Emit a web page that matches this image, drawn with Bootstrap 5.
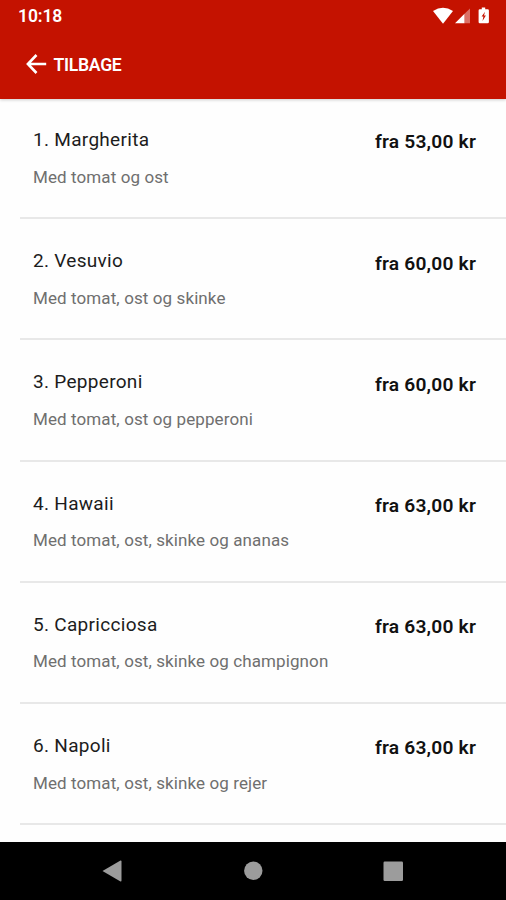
<!DOCTYPE html>
<html lang="da">
<head>
<meta charset="utf-8">
<meta name="viewport" content="width=device-width, initial-scale=1">
<title>Pizza</title>
<link href="https://cdn.jsdelivr.net/npm/bootstrap@5.3.0/dist/css/bootstrap.min.css" rel="stylesheet">
<style>
body { font-family: Roboto, "Noto Sans", sans-serif; background: #fefefe; color: #111; }
.app-screen { height: 900px; }
.app-header { background: #c41200; height: 98.6px; box-shadow: 0 1px 3px rgba(0,0,0,.2); }
.status-line { height: 32px; padding: 0 15px 0 18px; }
.clock { font-size: 17.5px; font-weight: 600; line-height: 32px; letter-spacing: -.1px; }
.back-link { height: 64px; gap: 6.5px; padding-left: 26px; font-size: 17.6px; font-weight: 600; letter-spacing: -.3px; }
.back-link span { line-height: 26px; padding-top: 1px; }
.menu-list { padding-left: 20px; margin-top: -.6px; }
.menu-item { height: 121.2px; border-bottom: 2px solid #e8e8e8; padding: 29.1px 30px 0 13px; }
.item-name { font-size: 19px; line-height: 26px; letter-spacing: .3px; color: #1c1c1c; }
.item-text { font-size: 17px; line-height: 24px; margin-top: 11.6px; color: #6f6f6f; letter-spacing: .1px; }
.item-price { font-size: 19.2px; line-height: 26px; padding-top: 2.4px; font-weight: 600; letter-spacing: .2px; }
.system-nav { height: 58px; background: #000; }
</style>
</head>
<body>
<div class="app-screen d-flex flex-column overflow-hidden">
  <header class="app-header flex-shrink-0 text-white">
    <div class="status-line d-flex align-items-center justify-content-between">
      <span class="clock">10:18</span>
      <svg width="60" height="20" viewBox="0 0 60 20" fill="#fff" aria-hidden="true">
        <path d="M2 4.4Q12 -2.2 22 4.4L12 17Z" transform="translate(0 .7)"/>
        <path d="M24 17.3 33.5 7.8V17.3Z"/>
        <path d="M33.5 7.8 39 2.6V17.3H33.5Z" opacity=".4"/>
        <path d="M48.800 3.200H50.800V1.600H54.200V3.200H56.600Q57.900 3.200 57.900 4.500V16Q57.900 17.300 56.600 17.300H48.800Q47.600 17.300 47.600 16V4.500Q47.600 3.200 48.800 3.200Z"/>
        <path d="M54 5.800 50.600 10.500H52.400L51.500 15 54.900 9.600H53Z" fill="#c41200"/>
      </svg>
    </div>
    <a href="#" class="back-link d-flex align-items-center text-white text-decoration-none">
      <svg width="21" height="20" viewBox="0 0 21 20" fill="none" stroke="#fff" stroke-width="2.600" aria-hidden="true"><path d="M10.500 1 1.900 10l8.600 9M2 10H20.200"/></svg>
      <span>TILBAGE</span>
    </a>
  </header>
  <main class="menu-list flex-grow-1 overflow-hidden">
    <div class="menu-item d-flex justify-content-between align-items-start">
      <div><div class="item-name">1. Margherita</div><div class="item-text">Med tomat og ost</div></div>
      <div class="item-price text-nowrap">fra 53,00 kr</div>
    </div>
    <div class="menu-item d-flex justify-content-between align-items-start">
      <div><div class="item-name">2. Vesuvio</div><div class="item-text">Med tomat, ost og skinke</div></div>
      <div class="item-price text-nowrap">fra 60,00 kr</div>
    </div>
    <div class="menu-item d-flex justify-content-between align-items-start">
      <div><div class="item-name">3. Pepperoni</div><div class="item-text">Med tomat, ost og pepperoni</div></div>
      <div class="item-price text-nowrap">fra 60,00 kr</div>
    </div>
    <div class="menu-item d-flex justify-content-between align-items-start">
      <div><div class="item-name">4. Hawaii</div><div class="item-text">Med tomat, ost, skinke og ananas</div></div>
      <div class="item-price text-nowrap">fra 63,00 kr</div>
    </div>
    <div class="menu-item d-flex justify-content-between align-items-start">
      <div><div class="item-name">5. Capricciosa</div><div class="item-text">Med tomat, ost, skinke og champignon</div></div>
      <div class="item-price text-nowrap">fra 63,00 kr</div>
    </div>
    <div class="menu-item d-flex justify-content-between align-items-start">
      <div><div class="item-name">6. Napoli</div><div class="item-text">Med tomat, ost, skinke og rejer</div></div>
      <div class="item-price text-nowrap">fra 63,00 kr</div>
    </div>
  </main>
  <nav class="system-nav flex-shrink-0">
    <svg class="d-block w-100" height="58" viewBox="0 0 506 58" fill="#9c9c9c" aria-hidden="true">
      <path d="M102.500 29 120.500 18.500Q121.500 18.300 121.500 19.500V38.500Q121.500 39.700 120.500 39.500Z"/>
      <circle cx="253.300" cy="28.700" r="9.200"/>
      <rect x="383.500" y="19.500" width="19.500" height="19.500" rx="1.200"/>
    </svg>
  </nav>
</div>
<script src="https://cdn.jsdelivr.net/npm/bootstrap@5.3.0/dist/js/bootstrap.bundle.min.js"></script>
</body>
</html>
